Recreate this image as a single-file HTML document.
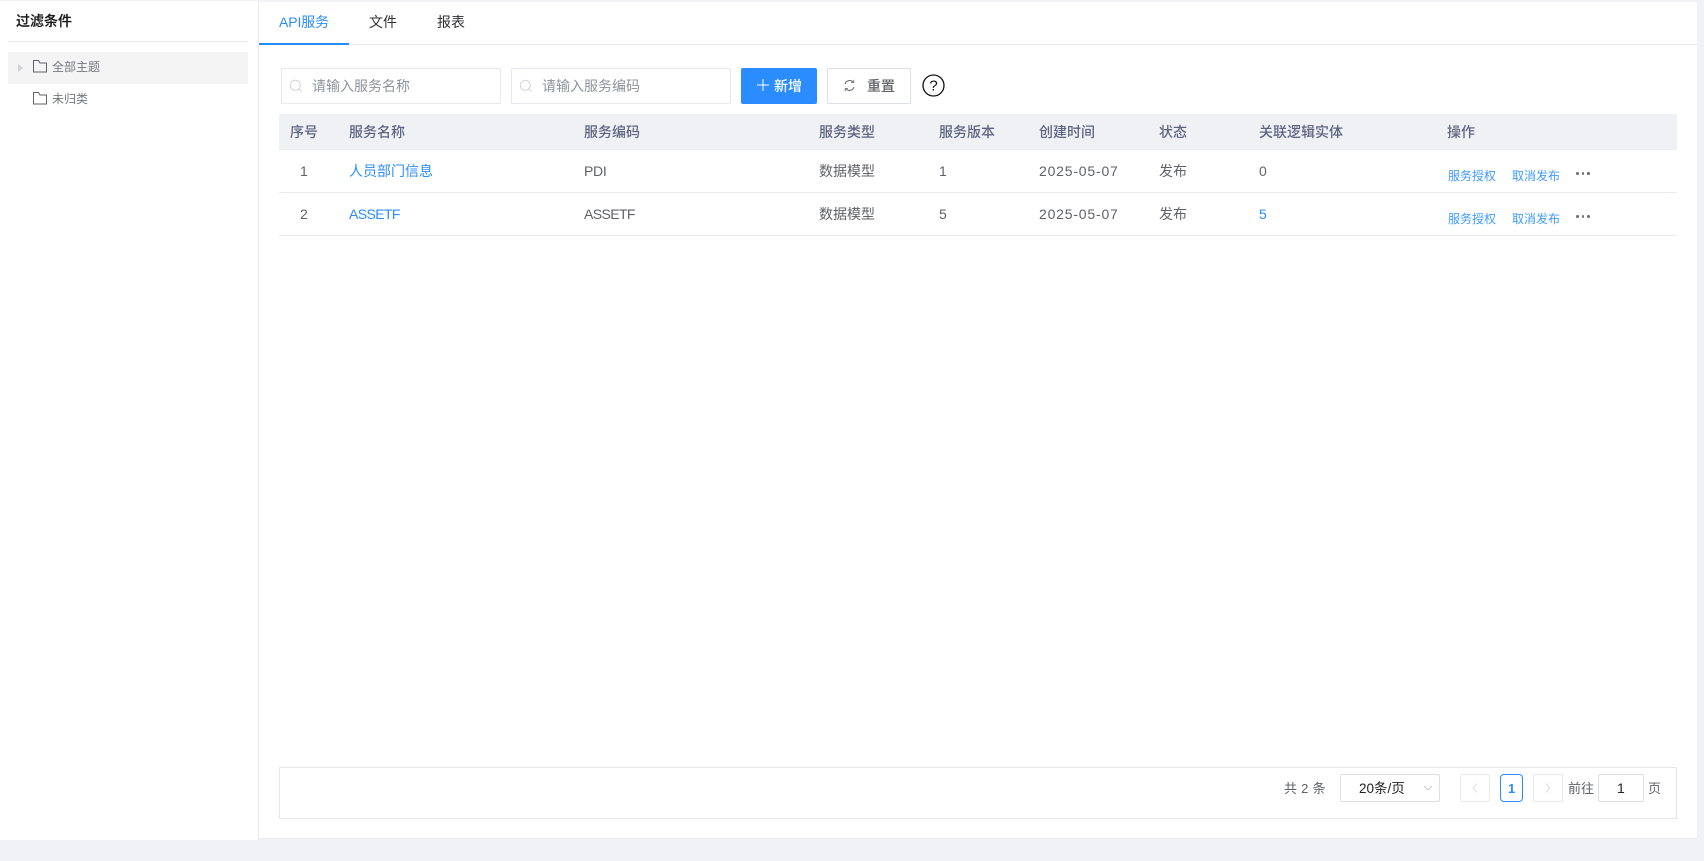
<!DOCTYPE html>
<html lang="zh">
<head>
<meta charset="utf-8">
<title>API服务</title>
<style>
html,body{margin:0;padding:0;width:1704px;height:861px;overflow:hidden;background:#f1f2f5;font-family:"Liberation Sans","Noto Sans CJK SC",sans-serif;font-size:14px;color:#606266}
div,span,svg{position:absolute;box-sizing:border-box;white-space:nowrap}
.t{line-height:20px;height:20px}
.th{font-weight:500;color:#5d6480;top:122px}
.r1{top:161px}
.r2{top:204px}
.blue{color:#2b8cff}
.op{font-size:12px;color:#3f9bff;line-height:18px;height:18px}
.box{border:1px solid #e6e8ef;border-radius:2px;background:#fff}
.ph{color:#8f939c;top:76px}
.dots{width:14px;height:4px}
.dots i{position:absolute;width:2.500px;height:2.500px;border-radius:50%;background:#6f7278;top:0}
</style>
</head>
<body>
<!-- sidebar -->
<div style="left:0;top:1px;width:258px;height:839px;background:#fff"></div>
<div class="t" style="left:16px;top:11px;font-weight:500;color:#1a1a1a;-webkit-text-stroke:.2px #1a1a1a">过滤条件</div>
<div style="left:8px;top:41px;width:240px;height:1px;background:#e9ebf1"></div>
<div style="left:8px;top:52px;width:240px;height:32px;background:#f4f4f5"></div>
<div style="left:18px;top:64px;width:0;height:0;border-left:5px solid #cfd1d5;border-top:4px solid transparent;border-bottom:4px solid transparent"></div>
<svg style="left:33px;top:60px" width="14" height="13" viewBox="0 0 14 13"><path d="M.5.500h5l1.500 2.500h6.500v9h-13z" fill="none" stroke="#606266"/></svg>
<div class="t" style="left:52px;top:57px;font-size:12px;color:#75787f">全部主题</div>
<svg style="left:33px;top:92px" width="14" height="13" viewBox="0 0 14 13"><path d="M.5.500h5l1.500 2.500h6.500v9h-13z" fill="none" stroke="#606266"/></svg>
<div class="t" style="left:52px;top:89px;font-size:12px;color:#75787f">未归类</div>

<!-- main panel -->
<div style="left:259px;top:2px;width:1438px;height:837px;background:#fff;border-bottom:1px solid #e9ebf1"></div>
<div style="left:258px;top:1px;width:1px;height:839px;background:#e9ebf1"></div>
<div style="left:259px;top:44px;width:1438px;height:1px;background:#e9ebf1"></div>
<div style="left:259px;top:43px;width:90px;height:2px;background:#2b8cff"></div>
<div class="t blue" style="left:279px;top:12px;letter-spacing:-.1px">API服务</div>
<div class="t" style="left:369px;top:12px;color:#303133">文件</div>
<div class="t" style="left:437px;top:12px;color:#303133">报表</div>

<!-- toolbar -->
<div class="box" style="left:281px;top:68px;width:220px;height:36px"></div>
<svg style="left:289px;top:79px" width="14" height="14" viewBox="0 0 14 14"><circle cx="6.300" cy="6.300" r="5" fill="none" stroke="#d3d5da"/><path d="M10 10l2.500 2.500" stroke="#d3d5da"/></svg>
<div class="t ph" style="left:312px">请输入服务名称</div>
<div class="box" style="left:511px;top:68px;width:220px;height:36px"></div>
<svg style="left:519px;top:79px" width="14" height="14" viewBox="0 0 14 14"><circle cx="6.300" cy="6.300" r="5" fill="none" stroke="#d3d5da"/><path d="M10 10l2.500 2.500" stroke="#d3d5da"/></svg>
<div class="t ph" style="left:542px">请输入服务编码</div>
<div style="left:741px;top:68px;width:76px;height:36px;background:#2b8cff;border-radius:2px"></div>
<svg style="left:757px;top:79px" width="12" height="12" viewBox="0 0 12 12"><path d="M6 0v12M0 6h12" stroke="#fff" fill="none"/></svg>
<div class="t" style="left:774px;top:76px;color:#fff;font-weight:500">新增</div>
<div class="box" style="left:827px;top:68px;width:84px;height:36px;border-color:#dcdfe6"></div>
<svg style="left:843px;top:79px" width="13" height="13" viewBox="0 0 13 13"><path d="M2 5A4.800 4.800 0 0 1 10 3M11 8A4.800 4.800 0 0 1 3 10" fill="none" stroke="#606266"/><path d="M10.800.800v2.700h-2.700M2.200 12.200V9.500h2.700" fill="none" stroke="#606266" stroke-width=".8"/></svg>
<div class="t" style="left:867px;top:76px;color:#606266;font-weight:500">重置</div>
<svg style="left:922px;top:74px" width="23" height="23" viewBox="0 0 23 23"><circle cx="11.500" cy="11.500" r="10.500" fill="none" stroke="#111" stroke-width="1.300"/><text x="11.500" y="16.500" text-anchor="middle" font-family="Liberation Sans" font-size="15" fill="#111">?</text></svg>

<!-- table -->
<div style="left:279px;top:114px;width:1398px;height:36px;background:#f0f1f5;border-bottom:1px solid #ebedf2"></div>
<div style="left:279px;top:192px;width:1398px;height:1px;background:#e9ebf1"></div>
<div style="left:279px;top:235px;width:1398px;height:1px;background:#e9ebf1"></div>

<div class="t th" style="left:290px">序号</div>
<div class="t th" style="left:349px">服务名称</div>
<div class="t th" style="left:584px">服务编码</div>
<div class="t th" style="left:819px">服务类型</div>
<div class="t th" style="left:939px">服务版本</div>
<div class="t th" style="left:1039px">创建时间</div>
<div class="t th" style="left:1159px">状态</div>
<div class="t th" style="left:1259px">关联逻辑实体</div>
<div class="t th" style="left:1447px">操作</div>

<div class="t r1" style="left:300px">1</div>
<div class="t r1 blue" style="left:349px">人员部门信息</div>
<div class="t r1" style="left:584px;letter-spacing:-.3px">PDI</div>
<div class="t r1" style="left:819px">数据模型</div>
<div class="t r1" style="left:939px">1</div>
<div class="t r1" style="left:1039px;letter-spacing:.8px">2025-05-07</div>
<div class="t r1" style="left:1159px">发布</div>
<div class="t r1" style="left:1259px">0</div>
<div class="op" style="left:1448px;top:167px">服务授权</div>
<div class="op" style="left:1512px;top:167px">取消发布</div>
<div class="dots" style="left:1576px;top:172px"><i style="left:0"></i><i style="left:5.500px"></i><i style="left:11px"></i></div>

<div class="t r2" style="left:300px">2</div>
<div class="t r2 blue" style="left:349px;letter-spacing:-.6px">ASSETF</div>
<div class="t r2" style="left:584px;letter-spacing:-.6px">ASSETF</div>
<div class="t r2" style="left:819px">数据模型</div>
<div class="t r2" style="left:939px">5</div>
<div class="t r2" style="left:1039px;letter-spacing:.8px">2025-05-07</div>
<div class="t r2" style="left:1159px">发布</div>
<div class="t r2 blue" style="left:1259px">5</div>
<div class="op" style="left:1448px;top:210px">服务授权</div>
<div class="op" style="left:1512px;top:210px">取消发布</div>
<div class="dots" style="left:1576px;top:215px"><i style="left:0"></i><i style="left:5.500px"></i><i style="left:11px"></i></div>

<!-- pagination -->
<div style="left:279px;top:767px;width:1398px;height:52px;border:1px solid #e4e6ea;background:#fff"></div>
<div class="t" style="left:1284px;top:778.500px;font-size:13px;word-spacing:.5px">共 2 条</div>
<div class="box" style="left:1340px;top:774px;width:100px;height:28px;border-color:#dcdfe6"></div>
<div class="t" style="left:1359px;top:779px;font-size:13.500px;color:#222">20条/页</div>
<svg style="left:1423px;top:785px" width="10" height="7" viewBox="0 0 10 7"><path d="M1 1l4 4 4-4" fill="none" stroke="#c6c9cf"/></svg>
<div class="box" style="left:1460px;top:774px;width:30px;height:28px"></div>
<svg style="left:1471px;top:783px" width="8" height="10" viewBox="0 0 8 10"><path d="M6 .5L2 5l4 4.500" fill="none" stroke="#dcdfe6"/></svg>
<div style="left:1500px;top:774px;width:23px;height:28px;border:1px solid #2b8cff;border-radius:4px;background:#fff"></div>
<div class="t blue" style="left:1508px;top:778.500px;font-weight:700;font-size:13px">1</div>
<div class="box" style="left:1533px;top:774px;width:30px;height:28px"></div>
<svg style="left:1544px;top:783px" width="8" height="10" viewBox="0 0 8 10"><path d="M2 .5L6 5l-4 4.500" fill="none" stroke="#dcdfe6"/></svg>
<div class="t" style="left:1568px;top:778.500px;font-size:13px">前往</div>
<div class="box" style="left:1598px;top:774px;width:46px;height:28px;border-color:#dcdfe6"></div>
<div class="t" style="left:1617px;top:778px;color:#222">1</div>
<div class="t" style="left:1648px;top:778.500px;font-size:13px">页</div>
</body>
</html>
